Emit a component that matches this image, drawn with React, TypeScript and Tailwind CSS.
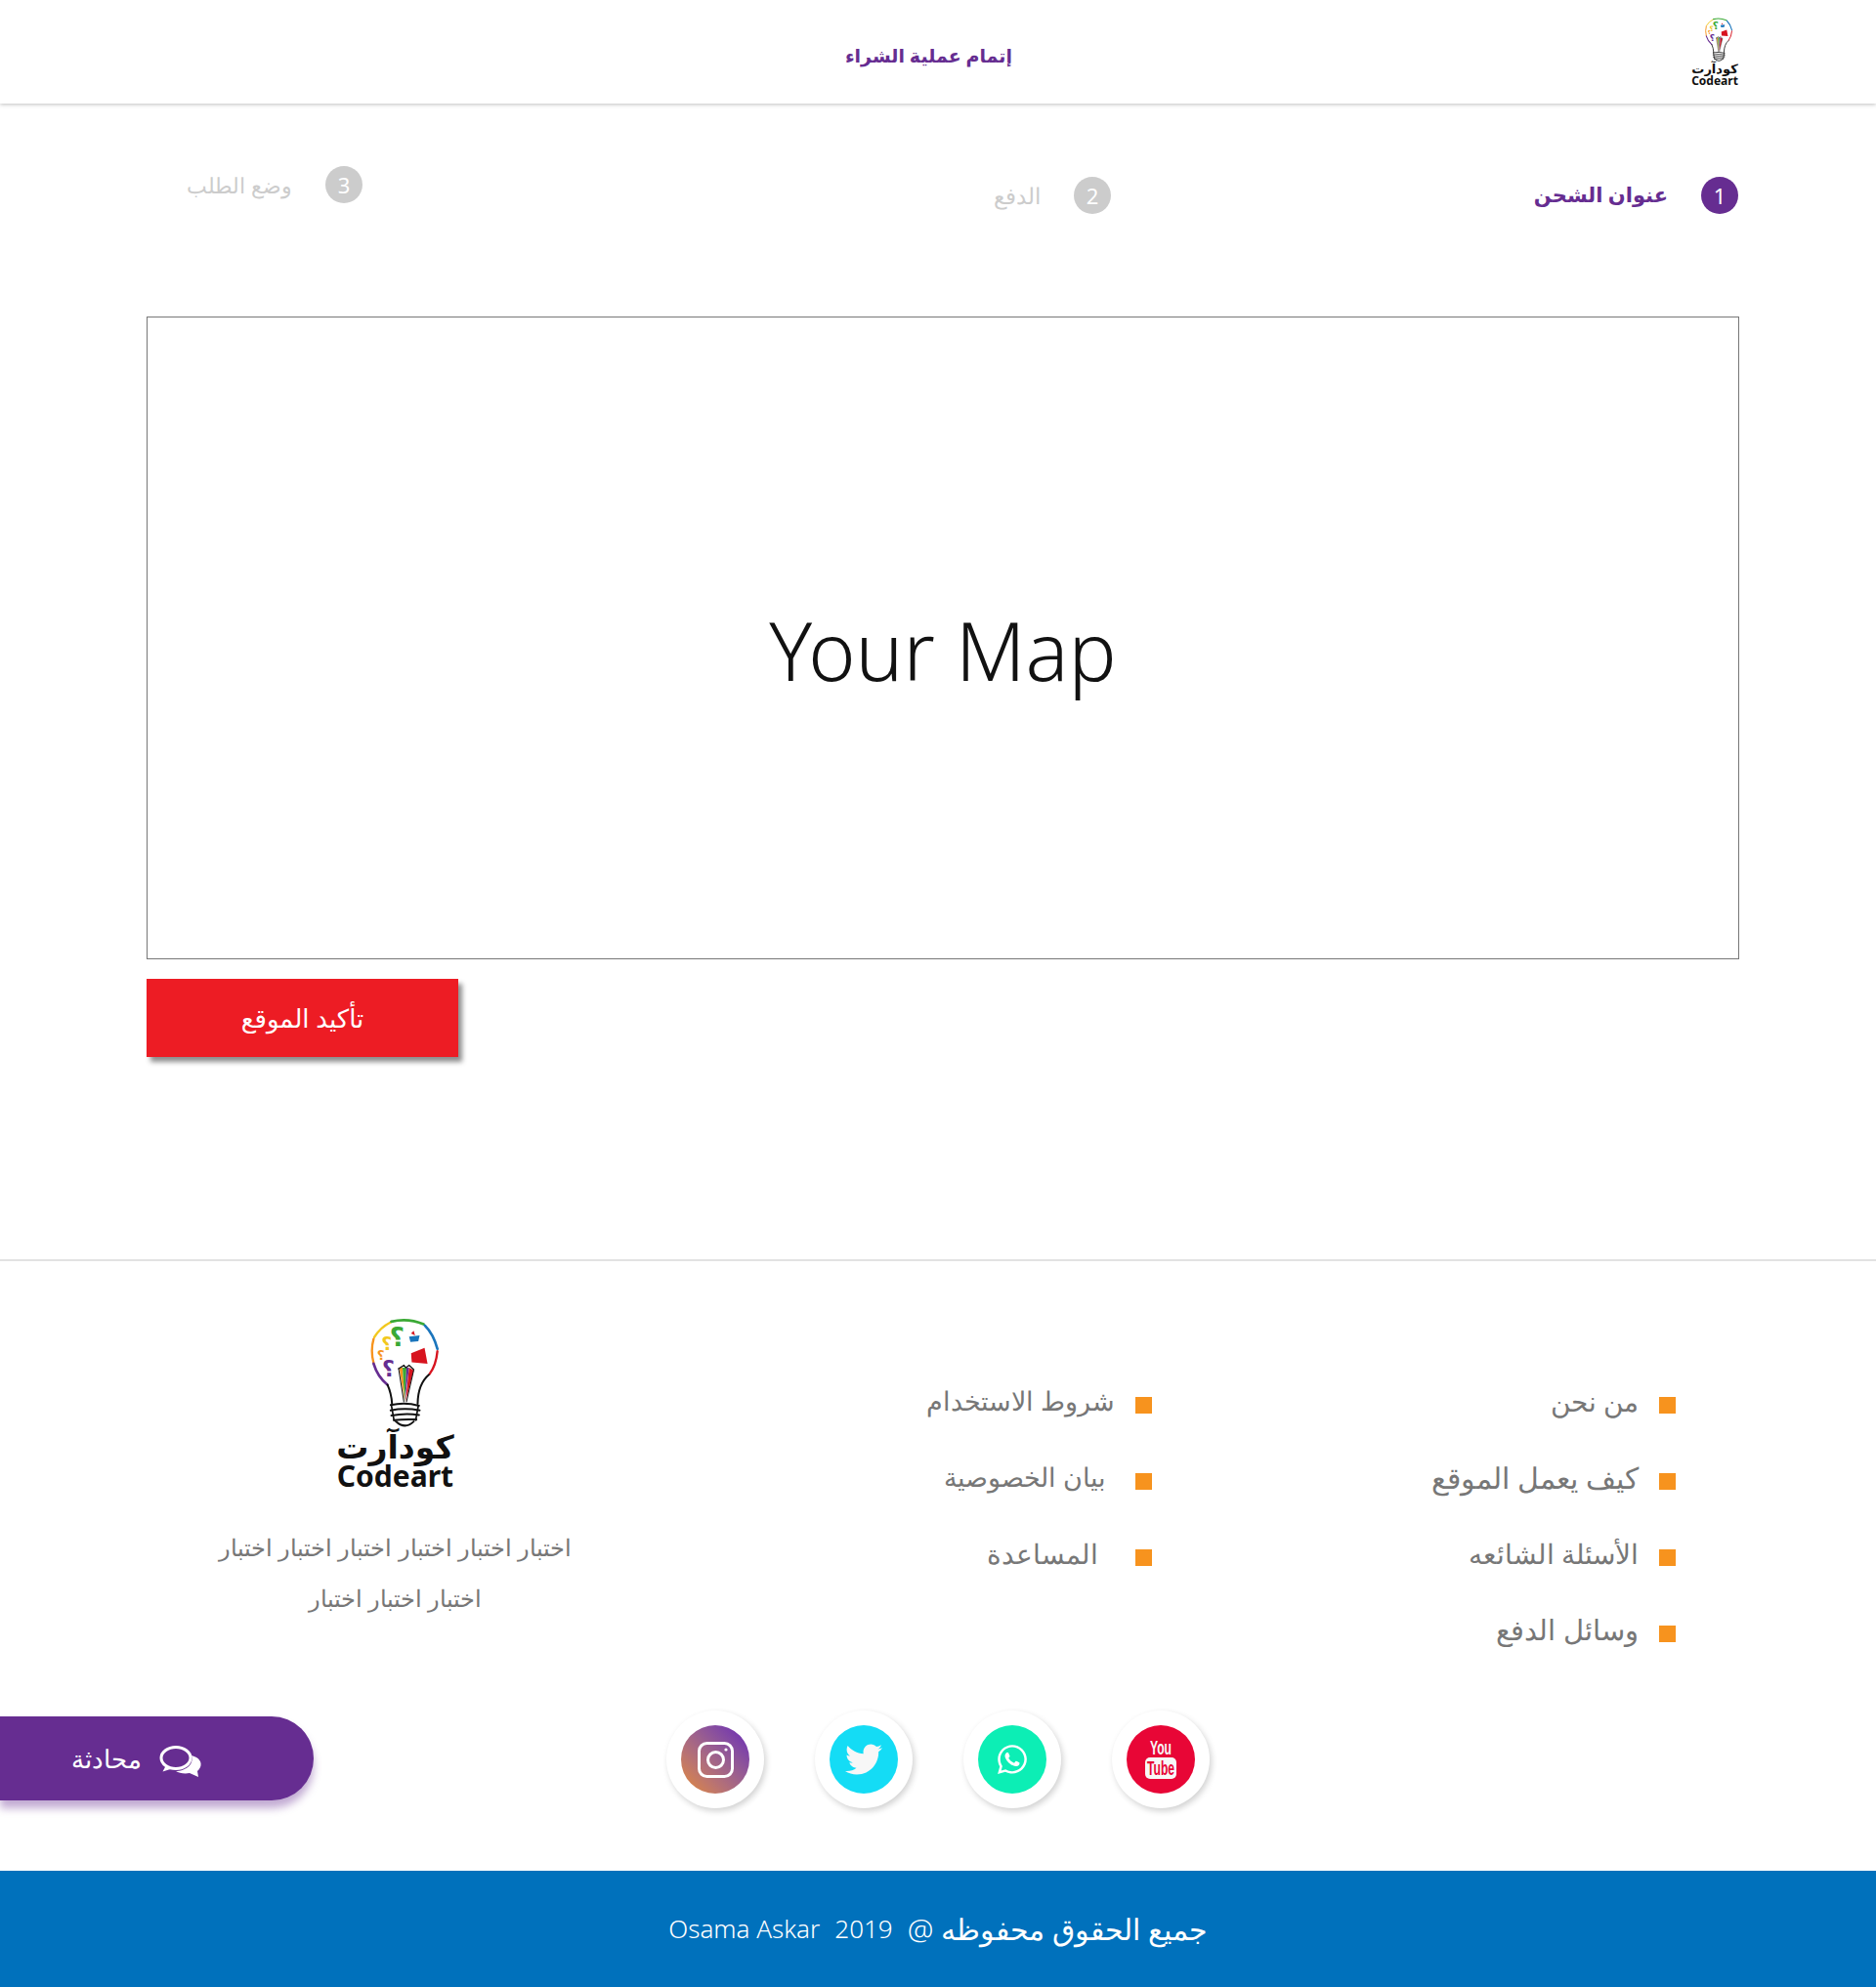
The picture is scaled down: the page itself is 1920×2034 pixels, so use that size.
import { FaTwitter, FaWhatsapp } from 'react-icons/fa'

const font = "font-['Noto_Sans','Open_Sans','DejaVu_Sans',sans-serif]"

function Bulb({ className }: { className: string }) {
  return (
    <svg viewBox="240 60 208 340" className={className} fill="none" strokeLinecap="round">
      <path d="M252 120 Q270 90 302 74" stroke="#f2c81e" strokeWidth="7" />
      <path d="M304 72 Q355 60 402 80" stroke="#3aa935" strokeWidth="8" />
      <path d="M406 84 Q432 110 444 155" stroke="#1b75bc" strokeWidth="8" />
      <path d="M444 162 Q440 205 420 232" stroke="#d7141f" strokeWidth="7" />
      <path d="M250 125 Q240 160 250 198" stroke="#f7941d" strokeWidth="7" />
      <path d="M250 200 Q262 240 292 264" stroke="#662d91" strokeWidth="8" />
      <path d="M292 264 Q304 290 306 322" stroke="#111" strokeWidth="6" />
      <path d="M418 234 Q385 262 384 322" stroke="#111" strokeWidth="6" />
      <path d="M302 326 Q345 316 388 328 M302 342 Q345 334 390 342 M304 358 Q345 350 388 356 M312 372 Q345 368 380 370 M316 374 Q345 402 372 376" stroke="#111" strokeWidth="6" />
      <path d="M304 326 L312 372 M386 328 L378 372" stroke="#111" strokeWidth="5" />
      <path d="M328 212 L345 316 L338 212 Z" fill="#f7941d" />
      <path d="M338 212 L345 316 L350 212 Z" fill="#3aa935" />
      <path d="M350 212 L345 316 L358 212 Z" fill="#662d91" />
      <path d="M358 212 L347 316 L372 220 Z" fill="#d7141f" />
      <path d="M326 215 L342 205 L348 212 L358 205 L372 218" stroke="#111" strokeWidth="4" />
      <path d="M326 215 L342 316 M372 220 L350 316" stroke="#111" strokeWidth="3" />
      <text x="321" y="146" textAnchor="middle" fontSize="78" fontWeight="700" fill="#3aa935" fontFamily="DejaVu Sans">؟</text>
      <text x="290" y="160" textAnchor="middle" fontSize="56" fontWeight="700" fill="#f2c81e" fontFamily="DejaVu Sans">؟</text>
      <text x="272" y="187" textAnchor="middle" fontSize="40" fontWeight="700" fill="#f7941d" fontFamily="DejaVu Sans">؟</text>
      <text x="295" y="240" textAnchor="middle" fontSize="66" fontWeight="700" fill="#662d91" fontFamily="DejaVu Sans">؟</text>
      <path d="M358 118 L390 114 L386 132 L362 134 Z" fill="#1b75bc" />
      <path d="M364 108 L372 100 L376 114 Z" fill="#d7141f" />
      <path d="M364 168 L405 152 L414 200 L366 196 Z" fill="#d7141f" />
    </svg>
  )
}

function YoutubeIcon() {
  return (
    <svg viewBox="0 0 32 39" className="w-[32px] h-[39px] overflow-visible">
      <text x="16" y="14" textAnchor="middle" textLength="22" lengthAdjust="spacingAndGlyphs" fontSize="20" fontWeight="700" fill="#f7f7f7" fontFamily="Liberation Sans">You</text>
      <rect x="0" y="17" width="32" height="22" rx="5" fill="#f7f7f7" />
      <text x="16" y="35" textAnchor="middle" textLength="28" lengthAdjust="spacingAndGlyphs" fontSize="21" fontWeight="700" fill="#e80636" fontFamily="Liberation Sans">Tube</text>
    </svg>
  )
}

function InstagramIcon() {
  return (
    <svg viewBox="0 0 37 37" className="w-[37px] h-[37px]" fill="none" stroke="#fff">
      <rect x="1.5" y="1.5" width="34" height="34" rx="8" strokeWidth="3" />
      <circle cx="18.5" cy="18.5" r="8" strokeWidth="3" />
      <circle cx="29" cy="8" r="1.6" fill="#fff" stroke="none" />
    </svg>
  )
}

function ChatIcon() {
  return (
    <svg viewBox="0 0 44 33" className="w-[44px] h-[33px] mt-[6px]">
      <path d="M33 10 C41 12 44 17 42 22 C41 24 40 25 39 26 L40 32 L31 28 C26 29 20 28 17 26 C26 26 36 20 33 10 Z" fill="#fff" />
      <ellipse cx="17" cy="12.5" rx="15" ry="11" fill="#662d91" stroke="#fff" strokeWidth="3" />
      <path d="M7 20 L3.5 26.5 L13 23.5 Z" fill="#fff" />
    </svg>
  )
}

const linksA = [
  { label: 'من نحن', style: 'mr-[21px] text-[28px]' },
  { label: 'كيف يعمل الموقع', style: 'mr-[21px] text-[30px]' },
  { label: 'الأسئلة الشائعه', style: 'mr-[21px] text-[28px]' },
  { label: 'وسائل الدفع', style: 'mr-[21px] text-[29px]' },
]

const linksB = [
  { label: 'شروط الاستخدام', style: 'mr-[21px] text-[27px]' },
  { label: 'بيان الخصوصية', style: 'mr-[30px] text-[27px]' },
  { label: 'المساعدة', style: 'mr-[38px] text-[28px]' },
]

function LinkList({ items, width }: { items: { label: string; style: string }[]; width: string }) {
  return (
    <ul className={width + ' pt-[106px]'}>
      {items.map((item) => (
        <li key={item.label} className="flex items-center h-[78px] font-light text-[#777777]">
          <span className="w-[17px] h-[17px] bg-[#f7931e] shrink-0 mt-[4px]"></span>
          <span className={item.style + ' mb-[4px]'}>{item.label}</span>
        </li>
      ))}
    </ul>
  )
}

export default function App() {
  return (
    <div dir="rtl" className={font + ' w-[1920px] bg-white'}>
      <header className="relative h-[106px] flex items-center pr-[140px] shadow-[0_1px_4px_rgba(0,0,0,0.25)]">
        <div className="w-[50px] flex flex-col items-center">
          <Bulb className="w-[30px] h-[46px] translate-x-[4px]" />
          <div className="text-[13px] leading-[13px] font-bold text-[#111]">كودآرت</div>
          <div dir="ltr" className="text-[12px] leading-[11px] font-bold text-[#111]">Codeart</div>
        </div>
        <div className="mr-[694px] text-[19px] font-bold text-[#662d91] mt-[8px]">إتمام عملية الشراء</div>
      </header>

      <main className="mr-[140px] ml-[150px]">
        <div className="flex items-start pt-[75px] pr-[1px] h-[218px]">
          <div className="w-[642px] flex items-center gap-[34px]">
            <span className="w-[38px] h-[38px] rounded-full bg-[#662d91] text-white text-[22px] flex items-center justify-center">1</span>
            <span className="text-[21px] font-bold text-[#662d91]">عنوان الشحن</span>
          </div>
          <div className="w-[766px] flex items-center gap-[34px]">
            <span className="w-[38px] h-[38px] rounded-full bg-[#cccccc] text-white text-[22px] flex items-center justify-center">2</span>
            <span className="text-[23px] font-light text-[#cccccc]">الدفع</span>
          </div>
          <div className="flex items-center gap-[34px] -mt-[11px]">
            <span className="w-[38px] h-[38px] rounded-full bg-[#cccccc] text-white text-[22px] flex items-center justify-center">3</span>
            <span className="text-[22px] font-light text-[#cccccc]">وضع الطلب</span>
          </div>
        </div>

        <div className="h-[658px] border border-[#777777] flex items-center justify-center pt-[24px]">
          <span dir="ltr" className="text-[82px] font-light text-[#111111]">Your Map</span>
        </div>

        <button className="mt-[20px] w-[319px] h-[80px] bg-[#ed1c24] text-white text-[26px] shadow-[4px_5px_5px_rgba(0,0,0,0.45)] block mr-auto">
          تأكيد الموقع
        </button>
      </main>

      <footer className="mt-[207px] border-t-2 border-[#e2e2e2]">
        <div className="flex h-[460px] pr-[205px]">
          <LinkList items={linksA} width="w-[536px]" />
          <LinkList items={linksB} width="w-[523px]" />
          <div className="w-[503px] pt-[57px] flex flex-col items-center">
            <Bulb className="w-[70px] h-[116px] translate-x-[9px]" />
            <div className="text-[33px] leading-[33px] font-bold text-[#111]">كودآرت</div>
            <div dir="ltr" className="text-[30px] leading-[28px] font-bold text-[#111]">Codeart</div>
            <p className="mt-[33px] text-[24px] leading-[52px] font-light text-[#777777] text-center">
              اختبار اختبار اختبار اختبار اختبار اختبار
              <br />
              اختبار اختبار اختبار
            </p>
          </div>
        </div>

        <div className="relative h-[100px] flex justify-center gap-[52px]">
          <div className="absolute left-0 top-[6px] w-[321px] h-[86px] rounded-r-[43px] bg-[#662d91] shadow-[0_8px_8px_rgba(102,45,145,0.4)] flex items-center justify-start pr-[114px] gap-[18px] text-white text-[26px] font-light">
            <ChatIcon />
            <span>محادثة</span>
          </div>
          <a className="w-[100px] h-[100px] rounded-full bg-white flex items-center justify-center shadow-[2px_3px_6px_rgba(0,0,0,0.18)]">
            <span className="w-[70px] h-[70px] rounded-full bg-[#e80636] flex items-center justify-center"><YoutubeIcon /></span>
          </a>
          <a className="w-[100px] h-[100px] rounded-full bg-white flex items-center justify-center shadow-[2px_3px_6px_rgba(0,0,0,0.18)]">
            <span className="w-[70px] h-[70px] rounded-full bg-[#0ceeb5] flex items-center justify-center"><FaWhatsapp className="text-white text-[34px]" /></span>
          </a>
          <a className="w-[100px] h-[100px] rounded-full bg-white flex items-center justify-center shadow-[2px_3px_6px_rgba(0,0,0,0.18)]">
            <span className="w-[70px] h-[70px] rounded-full bg-[#14dcf5] flex items-center justify-center"><FaTwitter className="text-[#f7f7f7] text-[38px]" /></span>
          </a>
          <a className="w-[100px] h-[100px] rounded-full bg-white flex items-center justify-center shadow-[2px_3px_6px_rgba(0,0,0,0.18)]">
            <span className="w-[70px] h-[70px] rounded-full bg-linear-to-bl from-[#6a1bb8] to-[#e68a22] flex items-center justify-center"><InstagramIcon /></span>
          </a>
        </div>

        <div className="mt-[64px] h-[119px] bg-[#0071bc] flex items-center justify-center gap-[15px] text-white">
          <span className="text-[30px] font-light">جميع الحقوق محفوظه @</span>
          <span className="text-[26px] font-light">2019</span>
          <span className="text-[26px] font-light">Osama Askar</span>
        </div>
      </footer>
    </div>
  )
}
